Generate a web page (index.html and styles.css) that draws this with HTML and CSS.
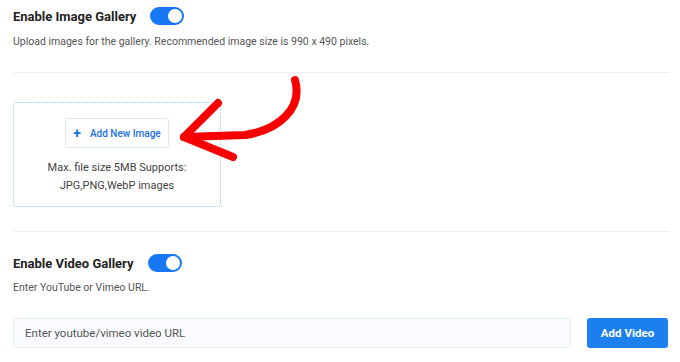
FILE: index.html
```html
<!DOCTYPE html>
<html lang="en">

<head>
    <meta charset="UTF-8">
    <title>Gallery Settings</title>
    <link rel="stylesheet" href="styles.css">
</head>

<body>
    <div class="page">
        <!-- image gallery -->
        <section class="setting">
            <div class="setting-head">
                <h3>Enable Image Gallery</h3>
                <span class="toggle"><span class="knob"></span></span>
            </div>
            <p class="hint">Upload images for the gallery. Recommended image size is 990 x 490 pixels.</p>
        </section>

        <hr class="divider">

        <div class="uploader">
            <div class="drop-zone">
                <button class="btn-outline"><span class="plus">+</span>Add New Image</button>
                <p class="drop-note">Max. file size 5MB Supports:<br>JPG,PNG,WebP images</p>
            </div>
        </div>

        <hr class="divider">

        <!-- video gallery -->
        <section class="setting video">
            <div class="setting-head">
                <h3>Enable Video Gallery</h3>
                <span class="toggle"><span class="knob"></span></span>
            </div>
            <p class="hint">Enter YouTube or Vimeo URL.</p>
        </section>

        <div class="video-row">
            <input class="url-input" type="text" placeholder="Enter youtube/vimeo video URL">
            <button class="btn-primary">Add Video</button>
        </div>

        <!-- red hand-drawn arrow over the uploader -->
        <svg class="arrow" width="130" height="100" viewBox="0 0 130 100">
            <path d="M120 8 C128 36 104 58 70 63 L9 65" fill="none" stroke="#f80000" stroke-width="8" stroke-linecap="round" stroke-linejoin="round" />
            <path d="M43 31 L9 65 L58 85" fill="none" stroke="#f80000" stroke-width="8" stroke-linecap="round" stroke-linejoin="round" />
        </svg>
    </div>
</body>

</html>
```

FILE: styles.css
```css
body {
    margin: 0;
    background-color: #fff;
    font-family: Roboto, "Liberation Sans", sans-serif;
    color: #333;
}

.page {
    position: relative;
    padding: 2px 10px 0 13px;
}

.setting {
    padding-top: 5px;
}

.setting-head {
    display: flex;
    align-items: center;
    gap: 14px;
}

.setting-head h3 {
    margin: 0;
    font-size: 13px;
    font-weight: 700;
    color: #222;
}

.toggle {
    width: 34px;
    height: 18px;
    border-radius: 9px;
    background-color: #1877f2;
    display: flex;
    align-items: center;
    justify-content: flex-end;
    padding: 0 2px;
    box-sizing: border-box;
}

.knob {
    width: 14px;
    height: 14px;
    border-radius: 50%;
    background-color: #fff;
}

.hint {
    margin: 10px 0 0;
    font-size: 10.5px;
    color: #555;
}

.divider {
    border: none;
    border-top: 1px solid #eeeeee;
    margin: 24px 0 0;
}

.uploader {
    padding-top: 29px;
}

.drop-zone {
    width: 208px;
    height: 105px;
    box-sizing: border-box;
    border: 1px dotted #9cc6ef;
    border-radius: 4px;
    display: flex;
    flex-direction: column;
    align-items: center;
    padding-top: 15px;
}

.btn-outline {
    width: 104px;
    height: 30px;
    border: 1px solid #dbe8f6;
    border-radius: 3px;
    background-color: #fff;
    color: #1b6fe0;
    font-family: inherit;
    font-size: 10px;
    font-weight: 500;
    white-space: nowrap;
    display: flex;
    align-items: center;
    justify-content: center;
    gap: 9px;
    padding: 0;
    cursor: pointer;
}

.plus {
    font-size: 14px;
    font-weight: 700;
}

.drop-note {
    margin: 11px 0 0;
    text-align: center;
    font-size: 11px;
    line-height: 18px;
    color: #444;
}

.video {
    padding-top: 22px;
}

.video .hint {
    margin-top: 9px;
}

.video-row {
    display: flex;
    gap: 16px;
    margin-top: 24px;
    padding-right: 2px;
}

.url-input {
    flex: 1;
    height: 30px;
    box-sizing: border-box;
    border: 1px solid #e2eefa;
    border-radius: 3px;
    background-color: #f9fbfe;
    padding: 0 11px;
    font-family: inherit;
    font-size: 11.5px;
    color: #333;
}

.url-input::placeholder {
    color: #555;
}

.btn-primary {
    width: 81px;
    height: 30px;
    border: none;
    border-radius: 3px;
    background-color: #1b80ee;
    color: #fff;
    font-family: inherit;
    font-size: 11.5px;
    font-weight: 700;
    cursor: pointer;
}

.arrow {
    position: absolute;
    left: 175px;
    top: 72px;
}
```
